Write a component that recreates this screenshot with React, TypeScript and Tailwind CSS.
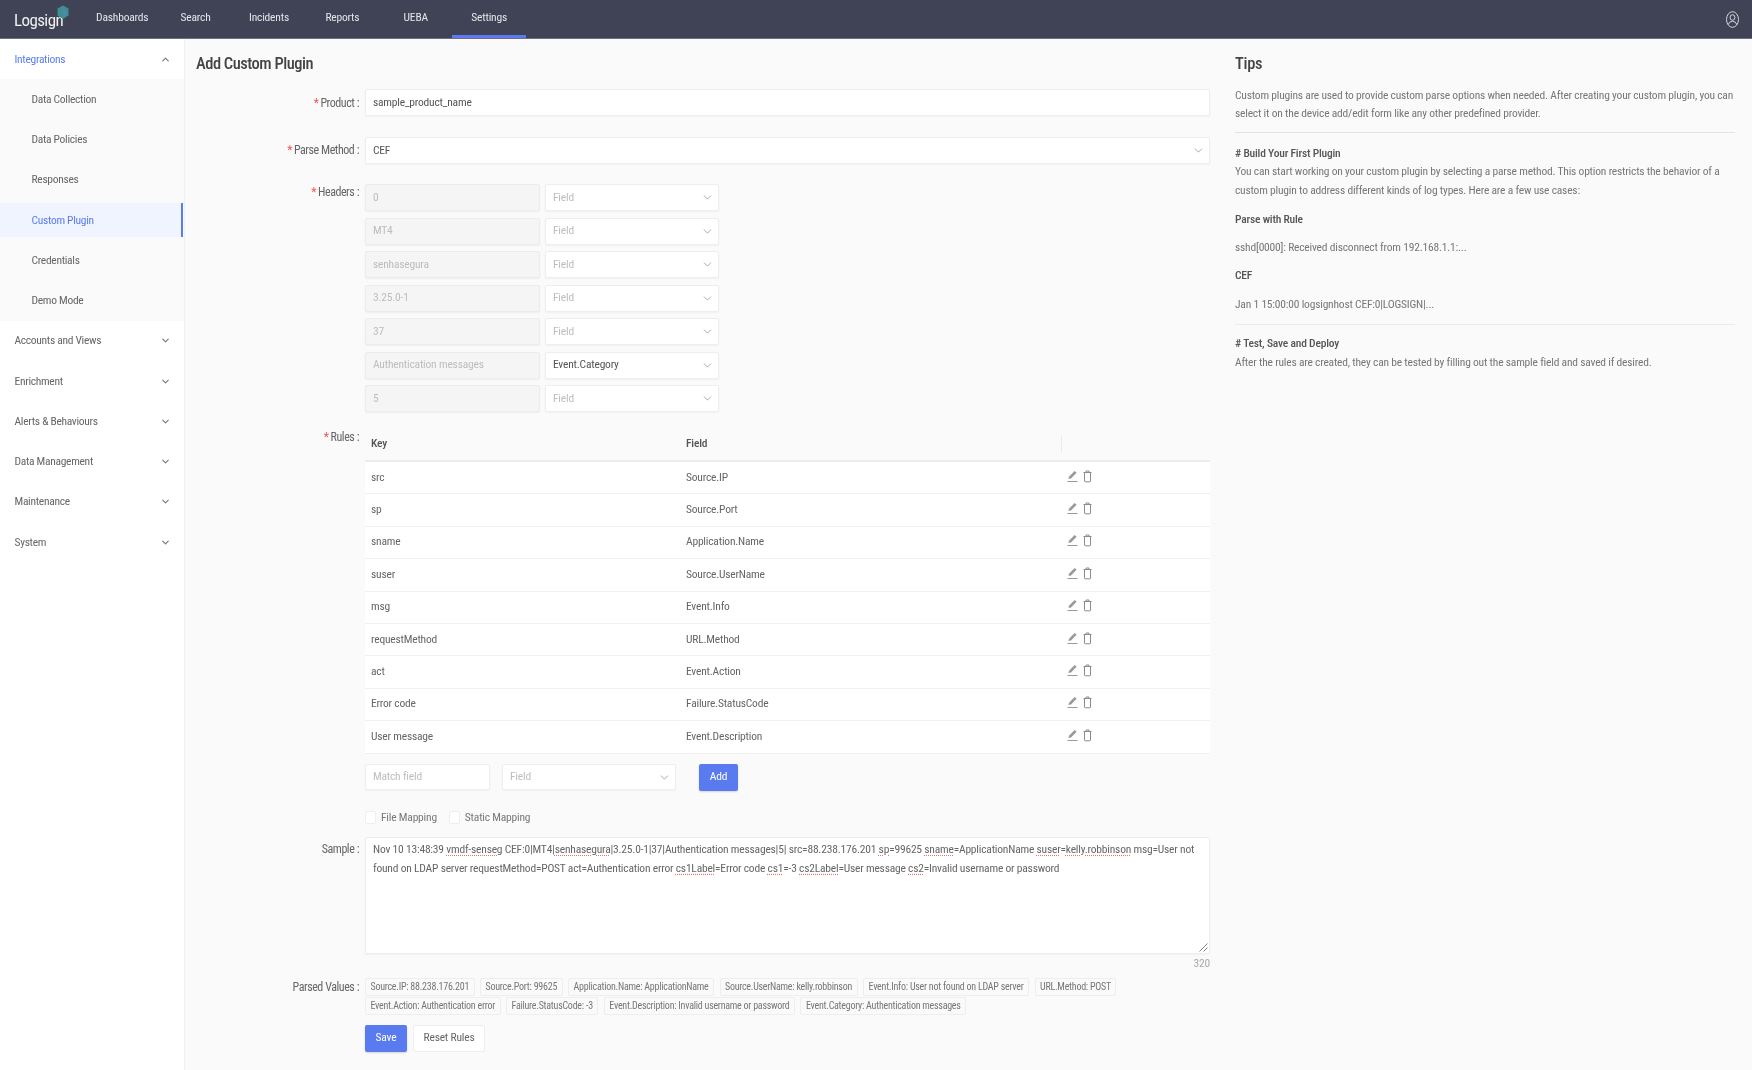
import React from 'react';
import { ChevronDown, ChevronUp } from 'lucide-react';

const navItems = ['Dashboards', 'Search', 'Incidents', 'Reports', 'UEBA', 'Settings'];
const subItems = ['Data Collection', 'Data Policies', 'Responses', 'Custom Plugin', 'Credentials', 'Demo Mode'];
const groups = ['Accounts and Views', 'Enrichment', 'Alerts & Behaviours', 'Data Management', 'Maintenance', 'System'];

const headers = [
  { value: '0', field: '' },
  { value: 'MT4', field: '' },
  { value: 'senhasegura', field: '' },
  { value: '3.25.0-1', field: '' },
  { value: '37', field: '' },
  { value: 'Authentication messages', field: 'Event.Category' },
  { value: '5', field: '' },
];

const rules = [
  ['src', 'Source.IP'],
  ['sp', 'Source.Port'],
  ['sname', 'Application.Name'],
  ['suser', 'Source.UserName'],
  ['msg', 'Event.Info'],
  ['requestMethod', 'URL.Method'],
  ['act', 'Event.Action'],
  ['Error code', 'Failure.StatusCode'],
  ['User message', 'Event.Description'],
];

const parsedRow1 = [
  'Source.IP: 88.238.176.201',
  'Source.Port: 99625',
  'Application.Name: ApplicationName',
  'Source.UserName: kelly.robbinson',
  'Event.Info: User not found on LDAP server',
  'URL.Method: POST',
];
const parsedRow2 = [
  'Event.Action: Authentication error',
  'Failure.StatusCode: -3',
  'Event.Description: Invalid username or password',
  'Event.Category: Authentication messages',
];

const Sp: React.FC<{ children: React.ReactNode }> = ({ children }) => (
  <span className="underline decoration-dotted decoration-[#e8706f] underline-offset-2">{children}</span>
);

const Label: React.FC<{ text: string; required?: boolean; className?: string }> = ({ text, required, className }) => (
  <div className={`w-[164px] shrink-0 text-right text-[12px] text-[#666] pr-[1px] tracking-[-0.45px] ${className ?? ''}`}>
    {required && <span className="text-[#f5564e] mr-[2px]">*</span>}
    {text} :
  </div>
);

const Select: React.FC<{ value?: string; placeholder?: string; className?: string }> = ({ value, placeholder, className }) => (
  <div className={`h-[27px] flex items-center justify-between bg-white border border-[#eeeeee] rounded-[2px] shadow-[0_1px_2px_rgba(0,0,0,0.04)] pl-[7px] pr-[4px] text-[11.5px] ${className ?? ''}`}>
    <span className={value ? 'text-[#555]' : 'text-[#bdbdbd]'}>{value ?? placeholder}</span>
    <ChevronDown size={13} strokeWidth={1.3} className="text-[#888]" />
  </div>
);

const EditIcon = () => (
  <svg width="11" height="13" viewBox="0 0 11 13" fill="none" className="text-[#999]">
    <path d="M1.5 9 L2.2 6.6 L7.6 1 L9.6 2.8 L4 8.4 Z" fill="currentColor" />
    <path d="M0.5 11.5 H10.5" stroke="currentColor" strokeWidth="1" />
  </svg>
);

const TrashIcon = () => (
  <svg width="9" height="13" viewBox="0 0 9 13" fill="none" className="text-[#8c8c8c]">
    <path d="M0.5 2.5 H8.5 M3 2.3 V1 H6 V2.3" stroke="currentColor" strokeWidth="1" />
    <path d="M1.5 2.5 V11 Q1.5 11.8 2.2 11.8 H6.8 Q7.5 11.8 7.5 11 V2.5" stroke="currentColor" strokeWidth="1" />
  </svg>
);

const App: React.FC = () => {
  return (
    <div className="h-[1070px] flex flex-col bg-[#fafafa] overflow-hidden font-['Roboto',sans-serif] tracking-[-0.2px] [font-stretch:85%] blur-[0.7px]">
      {/* top bar */}
      <header className="h-[39px] shrink-0 bg-[#404355] border-b border-[#6d7080] flex items-stretch">
        <div className="w-[85.5px] shrink-0 relative flex items-center pl-[14px] pt-[4px]">
          <span className="text-[17px] text-[#f0f0f0] tracking-[-0.6px]">Logsign</span>
          <svg width="12" height="15" viewBox="0 0 12 15" className="absolute left-[57px] top-[5px]">
            <path d="M6 0.5 L11.5 3.5 V10.5 L6 14 L0.5 10.5 V3.5 Z" fill="#3f8f8d" />
            <path d="M6 4 L9 6 V9.5 L6 11.5 Z" fill="#4f86c6" />
          </svg>
        </div>
        {navItems.map((item) => (
          <div
            key={item}
            className={`w-[73.4px] flex items-center justify-center text-[11.5px] text-[#e4e5ea] border-b-[3px] ${
              item === 'Settings' ? 'border-[#5a7bf0]' : 'border-transparent'
            }`}
          >
            {item}
          </div>
        ))}
        <div className="ml-auto flex items-center pr-[13px]">
          <svg width="13" height="17" viewBox="0 0 13 17" fill="none" stroke="#d5d6dc" strokeWidth="1">
            <ellipse cx="6.5" cy="8.5" rx="6" ry="7.8" />
            <ellipse cx="6.5" cy="6.5" rx="2.4" ry="2.8" />
            <path d="M2.2 13.6 Q3 10.3 6.5 10.3 Q10 10.3 10.8 13.6" />
          </svg>
        </div>
      </header>

      <div className="flex-1 flex min-h-0">
        {/* sidebar */}
        <aside className="w-[185px] shrink-0 bg-white border-r border-[#f1f1f1] text-[11.5px] text-[#666] tracking-[-0.3px]">
          <div className="h-[40.25px] flex items-center justify-between pl-[14.5px] pr-[13px] text-[#5a7bf0]">
            Integrations
            <ChevronUp size={11} strokeWidth={2.5} className="text-[#777]" />
          </div>
          <div className="bg-[#fafafa] pr-[1px]">
            {subItems.map((item) => (
              <div key={item} className="h-[40.25px] flex items-center">
                <div
                  className={`w-full flex items-center pl-[31.5px] ${
                    item === 'Custom Plugin'
                      ? 'h-[34px] bg-[#f0f4ff] text-[#5a7bf0] border-r-2 border-[#5a7bf0]'
                      : ''
                  }`}
                >
                  {item}
                </div>
              </div>
            ))}
          </div>
          {groups.map((group) => (
            <div key={group} className="h-[40.25px] flex items-center justify-between pl-[14.5px] pr-[13px]">
              {group}
              <ChevronDown size={11} strokeWidth={2.5} className="text-[#777]" />
            </div>
          ))}
        </aside>

        <main className="flex-1 flex min-w-0">
          {/* form */}
          <section className="w-[1025px] shrink-0 pl-[11px]">
            <h1 className="mt-[14px] h-[22px] leading-[22px] text-[16.5px] font-medium text-[#444] tracking-[-0.5px]">Add Custom Plugin</h1>

            <div className="mt-[14px] flex">
              <Label text="Product" required className="h-[27px] leading-[28px]" />
              <div className="ml-[5px] flex-1 h-[27px] flex items-center bg-white border border-[#eeeeee] rounded-[2px] shadow-[0_1px_2px_rgba(0,0,0,0.04)] pl-[7px] pt-[1px] text-[11.5px] text-[#555]">
                sample_product_name
              </div>
            </div>

            <div className="mt-[21px] flex">
              <Label text="Parse Method" required className="h-[27px] leading-[27px]" />
              <Select value="CEF" className="ml-[5px] flex-1" />
            </div>

            <div className="mt-[20px] flex">
              <Label text="Headers" required className="leading-[17px]" />
              <div className="ml-[5px] flex-1 flex flex-col gap-[6.5px]">
                {headers.map((h) => (
                  <div key={h.value} className="flex gap-[5px]">
                    <div className="w-[175px] h-[27px] flex items-center bg-[#f5f5f5] border border-[#ececec] rounded-[2px] shadow-[0_1px_2px_rgba(0,0,0,0.05)] pl-[7px] text-[11.5px] text-[#bdbdbd]">
                      {h.value}
                    </div>
                    <Select value={h.field || undefined} placeholder="Field" className="w-[174px]" />
                  </div>
                ))}
              </div>
            </div>

            <div className="mt-[12px] flex">
              <Label text="Rules" required className="leading-[26px]" />
              <div className="ml-[5px] flex-1">
                <div className="grid grid-cols-[315px_382px_1fr] h-[38px] pt-[4px] items-center border-b-2 border-[#ececec] text-[11.5px] text-[#555] font-medium">
                  <div className="pl-[6px]">Key</div>
                  <div className="pl-[6px] flex items-center border-r border-[#ececec] h-[18px]">Field</div>
                  <div />
                </div>
                {rules.map(([key, field]) => (
                  <div key={key} className="grid grid-cols-[315px_382px_1fr] h-[32.4px] pb-[1px] items-center bg-white border-b border-[#f0f0f0] text-[11.5px] text-[#666]">
                    <div className="pl-[6px]">{key}</div>
                    <div className="pl-[6px]">{field}</div>
                    <div className="pl-[5px] flex items-center gap-[5px] pb-[2px]">
                      <EditIcon />
                      <TrashIcon />
                    </div>
                  </div>
                ))}

                <div className="mt-[10px] flex items-center">
                  <div className="w-[125px] h-[26px] flex items-center bg-white border border-[#eeeeee] rounded-[2px] shadow-[0_1px_2px_rgba(0,0,0,0.04)] pl-[7px] text-[11.5px] text-[#bdbdbd]">
                    Match field
                  </div>
                  <Select placeholder="Field" className="ml-[12px] w-[174px] !h-[26px]" />
                  <button className="ml-[23px] w-[39px] h-[27px] rounded-[2px] bg-[#5a7bf0] text-white text-[11.5px] shadow-[0_1px_2px_rgba(0,0,0,0.15)]">Add</button>
                </div>

                <div className="mt-[17px] h-[20px] flex items-center text-[11.5px] text-[#777]">
                  <span className="w-[11px] h-[13px] bg-white border border-[#eeeeee] rounded-[2px]" />
                  <span className="ml-[5px]">File Mapping</span>
                  <span className="ml-[12px] w-[11px] h-[13px] bg-white border border-[#eeeeee] rounded-[2px]" />
                  <span className="ml-[5px]">Static Mapping</span>
                </div>
              </div>
            </div>

            <div className="mt-[9px] flex">
              <Label text="Sample" className="leading-[24px]" />
              <div className="ml-[5px] flex-1">
                <div className="relative h-[117px] bg-white border border-[#eeeeee] rounded-[2px] shadow-[0_1px_2px_rgba(0,0,0,0.04)] pl-[7px] pt-[2px] text-[11.5px] leading-[19px] text-[#666] whitespace-nowrap">
                  <div>
                    Nov 10 13:48:39 <Sp>vmdf-senseg</Sp> CEF:0|MT4|<Sp>senhasegura</Sp>|3.25.0-1|37|Authentication messages|5| src=88.238.176.201 <Sp>sp</Sp>=99625 <Sp>sname</Sp>=ApplicationName <Sp>suser</Sp>=<Sp>kelly.robbinson</Sp> msg=User not
                  </div>
                  <div>
                    found on LDAP server requestMethod=POST act=Authentication error <Sp>cs1Label</Sp>=Error code <Sp>cs1</Sp>=-3 <Sp>cs2Label</Sp>=User message <Sp>cs2</Sp>=Invalid username or password
                  </div>
                  <svg width="9" height="9" viewBox="0 0 9 9" className="absolute right-[1px] bottom-[1px]" stroke="#777" strokeWidth="0.9">
                    <path d="M0.5 8.5 L8.5 0.5 M4.5 8.5 L8.5 4.5" />
                  </svg>
                </div>
                <div className="h-[14px] mt-[2px] leading-[14px] text-right text-[11.5px] text-[#aaa]">320</div>
              </div>
            </div>

            <div className="mt-[8px] flex">
              <Label text="Parsed Values" className="leading-[18px]" />
              <div className="ml-[5px] flex-1 flex flex-col gap-[1px]">
                {[parsedRow1, parsedRow2].map((row, i) => (
                  <div key={i} className="flex gap-[5.5px]">
                    {row.map((tag) => (
                      <span key={tag} className="h-[18px] flex items-center px-[4.5px] bg-[#fafafa] border border-[#eeeeee] rounded-[2px] text-[10px] text-[#777] whitespace-nowrap tracking-[-0.25px]">
                        {tag}
                      </span>
                    ))}
                  </div>
                ))}
                <div className="mt-[9px] flex gap-[6px]">
                  <button className="w-[42px] h-[27px] rounded-[2px] bg-[#5a7bf0] text-white text-[11.5px] shadow-[0_1px_2px_rgba(0,0,0,0.15)]">Save</button>
                  <button className="w-[72px] h-[27px] rounded-[2px] bg-white border border-[#eeeeee] text-[#666] text-[11.5px]">Reset Rules</button>
                </div>
              </div>
            </div>
          </section>

          {/* tips */}
          <section className="flex-1 min-w-0 pl-[25px] pr-[17px] text-[11.5px] text-[#777]">
            <h2 className="mt-[14px] h-[22px] leading-[22px] text-[16.5px] font-medium text-[#444] tracking-[-0.3px]">Tips</h2>
            <p className="mt-[11px] leading-[18px]">
              Custom plugins are used to provide custom parse options when needed. After creating your custom plugin, you can select it on the device add/edit form like any other predefined provider.
            </p>
            <hr className="mt-[10px] border-t border-[#e3e3e3]" />
            <h3 className="mt-[11px] leading-[18px] font-medium text-[#555]"># Build Your First Plugin</h3>
            <p className="leading-[18.5px]">
              You can start working on your custom plugin by selecting a parse method. This option restricts the behavior of a custom plugin to address different kinds of log types. Here are a few use cases:
            </p>
            <h4 className="mt-[11px] leading-[18px] font-medium text-[#555]">Parse with Rule</h4>
            <p className="mt-[10px] leading-[18px]">sshd[0000]: Received disconnect from 192.168.1.1:...</p>
            <h4 className="mt-[10px] leading-[18px] font-medium text-[#555]">CEF</h4>
            <p className="mt-[11px] leading-[18px]">Jan 1 15:00:00 logsignhost CEF:0|LOGSIGN|...</p>
            <hr className="mt-[11px] border-t border-[#ececec]" />
            <h3 className="mt-[9px] leading-[18px] font-medium text-[#555]"># Test, Save and Deploy</h3>
            <p className="leading-[20px]">After the rules are created, they can be tested by filling out the sample field and saved if desired.</p>
          </section>
        </main>
      </div>
    </div>
  );
};

export default App;
